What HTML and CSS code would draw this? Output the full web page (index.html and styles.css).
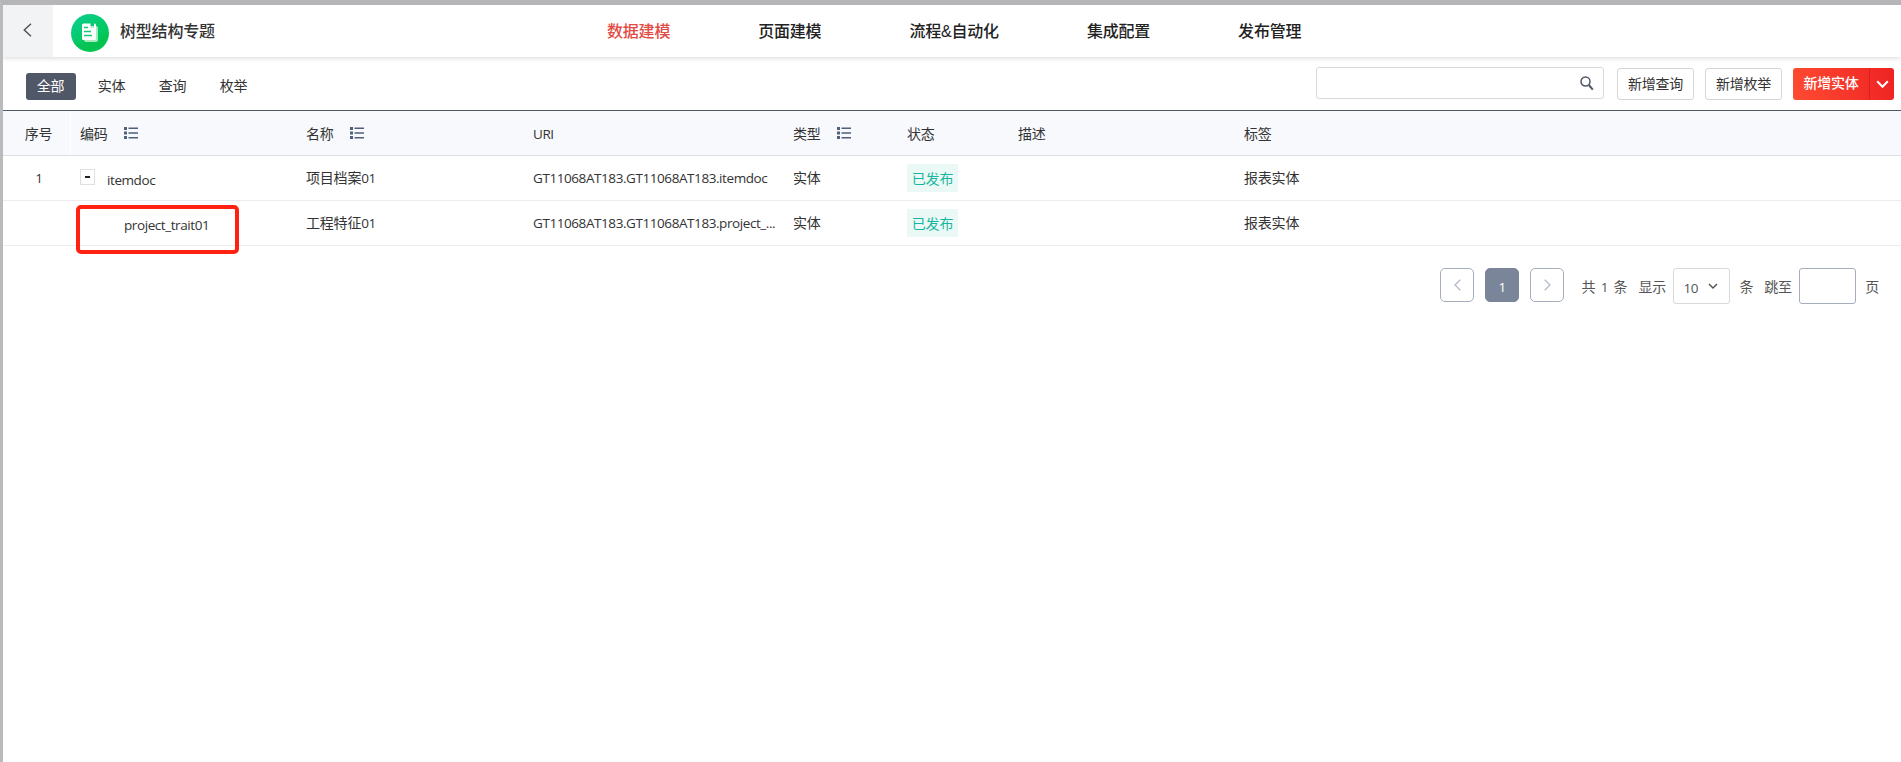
FILE: index.html
```html
<!DOCTYPE html>
<html lang="zh-CN">
<head>
<meta charset="utf-8">
<title>树型结构专题</title>
<link rel="stylesheet" href="styles.css">
</head>
<body>
<svg width="0" height="0" class="defs">
  <symbol id="list" viewBox="0 0 14 12"><path d="M0 0h3v3H0zM0 4.5h3v3H0zM0 9h3v3H0zM4.500 .5H14v1.600H4.500zM4.500 5.200H14v1.600H4.500zM4.500 9.900H14v1.600H4.500z"/></symbol>
</svg>
<header class="header">
  <button class="back"><svg width="9" height="14" viewBox="0 0 9 14"><path d="M8 .8 1.3 7 8 13.2"/></svg></button>
  <svg class="logo" width="38" height="38" viewBox="0 0 38 38">
    <defs><linearGradient id="g" x1="0" y1="0" x2=".7" y2="1"><stop offset="0" stop-color="#0bcf93"/><stop offset="1" stop-color="#00c64a"/></linearGradient></defs>
    <circle cx="19" cy="19" r="19" fill="url(#g)"/>
    <path d="M2 27 9 30 14 24 28 27 37 18A19 19 0 0 1 2 27z" fill="#08bd4c" opacity=".45"/>
    <path d="M14 12h11a2 2 0 0 1 2 2v12a2 2 0 0 1-2 2H15a2 2 0 0 1-2-2z" fill="#a4ebc0"/>
    <path d="M12.500 9.500h7v5l1.800-1.200 1.700 1.200v-5h.5a1.500 1.500 0 0 1 1.500 1.500v13.500a1.500 1.500 0 0 1-1.500 1.500h-11a1.500 1.500 0 0 1-1.500-1.500V11a1.500 1.500 0 0 1 1.500-1.500z" fill="#fff"/>
    <path d="M13 13.500h4M13 17.500h7M13 21.500h8" stroke="#12c978" stroke-width="1.300"/>
  </svg>
  <h1 class="title">树型结构专题</h1>
  <nav class="nav"><a class="active">数据建模</a><a>页面建模</a><a>流程&amp;自动化</a><a>集成配置</a><a>发布管理</a></nav>
</header>
<main class="main">
  <div class="toolbar">
    <div class="tabs"><span class="tab on">全部</span><span class="tab">实体</span><span class="tab">查询</span><span class="tab">枚举</span></div>
    <div class="search"><svg width="14" height="15" viewBox="0 0 14 15"><circle cx="5.500" cy="5.500" r="4.500"/><path d="m8.800 9 4 4.600" stroke-width="2"/></svg></div>
    <button class="btn">新增查询</button>
    <button class="btn">新增枚举</button>
    <div class="primary"><span class="primary-label">新增实体</span><span class="primary-more"><svg width="13" height="9" viewBox="0 0 13 9"><path d="m1.200 1.200 5.300 5.600 5.300-5.600"/></svg></span></div>
  </div>
  <div class="table">
    <div class="row head">
      <div class="cell index">序号</div>
      <div class="cell">编码<svg class="list"><use href="#list"/></svg></div>
      <div class="cell">名称<svg class="list"><use href="#list"/></svg></div>
      <div class="cell latin">URI</div>
      <div class="cell">类型<svg class="list"><use href="#list"/></svg></div>
      <div class="cell">状态</div>
      <div class="cell">描述</div>
      <div class="cell">标签</div>
    </div>
    <div class="row">
      <div class="cell index latin">1</div>
      <div class="cell"><span class="toggle"></span><span class="code latin">itemdoc</span></div>
      <div class="cell">项目档案<span class="latin">01</span></div>
      <div class="cell latin">GT11068AT183.GT11068AT183.itemdoc</div>
      <div class="cell">实体</div>
      <div class="cell"><span class="badge">已发布</span></div>
      <div class="cell"></div>
      <div class="cell">报表实体</div>
    </div>
    <div class="row">
      <div class="cell index"></div>
      <div class="cell marked"><span class="code child latin">project_trait01</span></div>
      <div class="cell">工程特征<span class="latin">01</span></div>
      <div class="cell latin">GT11068AT183.GT11068AT183.project_...</div>
      <div class="cell">实体</div>
      <div class="cell"><span class="badge">已发布</span></div>
      <div class="cell"></div>
      <div class="cell">报表实体</div>
    </div>
  </div>
  <div class="pager">
    <button class="page"><svg width="7" height="12" viewBox="0 0 7 12"><path d="M6.300 .7 1 6l5.300 5.300"/></svg></button>
    <button class="page current">1</button>
    <button class="page"><svg width="7" height="12" viewBox="0 0 7 12"><path d="M.7 .7 6 6 .7 11.300"/></svg></button>
    <span class="total">共 <span class="latin">1</span> 条</span>
    <span class="show">显示</span>
    <div class="select"><span class="latin">10</span><svg width="10" height="7" viewBox="0 0 10 7"><path d="m1 1 4 4 4-4"/></svg></div>
    <span class="unit">条</span>
    <span class="jump">跳至</span>
    <input class="goto">
    <span class="suffix">页</span>
  </div>
</main>
</body>
</html>
```

FILE: styles.css
```css
*, *::before, *::after { box-sizing: border-box; }
body {
  margin: 0;
  height: 762px;
  overflow: hidden;
  border-top: 5px solid #b6b6b8;
  border-left: 3px solid #b8bbbe;
  background: #fff;
  color: #333;
  font: 14px/20px "Liberation Sans", "Noto Sans CJK SC", sans-serif;
  letter-spacing: -0.2px;
}
.defs { position: absolute; }
svg { display: block; flex: none; }
button { margin: 0; padding: 0; font: inherit; letter-spacing: inherit; color: inherit; background: #fff; }
.latin { font-family: "Open Sans", "Noto Sans CJK SC", sans-serif; font-size: 13.5px; letter-spacing: -0.42px; }

.header {
  position: relative;
  display: flex;
  align-items: center;
  height: 52px;
  box-shadow: 0 1px 5px rgba(0, 0, 0, .16);
}
.back {
  display: flex;
  align-items: center;
  width: 50px;
  height: 52px;
  padding: 0 0 2px 20px;
  border: 0;
  background: #f2f3f5;
}
.back path { fill: none; stroke: #555; stroke-width: 1.5; }
.logo { margin: 4px 11px 0 18px; }
.title { margin: 2px 0 0; width: 96px; font-size: 16px; font-weight: 500; white-space: nowrap; }
.nav { display: flex; gap: 88px; margin: 2px 0 0 391px; font-size: 16px; font-weight: 500; white-space: nowrap; }
.nav a { color: #222; }
.nav .active { color: #e14c46; }

.toolbar { display: flex; align-items: flex-start; height: 53px; padding: 10px 7px 0 23px; }
.tabs { display: flex; gap: 11px; flex: 1; margin-top: 6px; }
.tab { width: 50px; height: 27px; line-height: 27px; padding-right: 1px; text-align: center; border-radius: 3px; }
.tab.on { background: #505766; color: #fff; }
.search {
  display: flex;
  align-items: center;
  justify-content: flex-end;
  width: 288px;
  height: 32px;
  padding-right: 9px;
  border: 1px solid #d9d9d9;
  border-radius: 3px;
  margin-right: 13px;
}
.search svg { fill: none; stroke: #505766; stroke-width: 1.5; }
.btn { width: 77px; height: 32px; margin: 1px 11px 0 0; border: 1px solid #d5d6d8; border-radius: 3px; white-space: nowrap; }
.primary {
  display: flex;
  width: 101px;
  height: 32px;
  margin-top: 1px;
  border-radius: 3px;
  color: #fff;
  font-weight: 500;
  background: linear-gradient(75deg, #ff4c32, #ee2223);
}
.primary-label { width: 77px; line-height: 31px; text-align: center; border-right: 1px solid #dd1f21; }
.primary-more { display: flex; flex: 1; align-items: center; justify-content: center; }
.primary-more path { fill: none; stroke: #fff; stroke-width: 2; }

.row {
  display: grid;
  grid-template-columns: 67px 1px 226px 227px 260px 114px 111px 226px 1fr;
  height: 45px;
  border-bottom: 1px solid #ececec;
}
.row > :first-child { grid-column: 1; }
.row > :nth-child(2) { grid-column: 3; }
.head { height: 46px; border-top: 1px solid #505766; border-bottom-color: #dcdfe4; background: #f7f9fd; }
.cell { display: flex; align-items: center; padding: 0 0 0 9px; white-space: nowrap; }
.head .cell { padding-top: 2px; }
.row .index { justify-content: center; padding-left: 4px; margin-right: -1px; }
.head .index { border-right: 1px solid #fff; }
.list { width: 14px; height: 12px; margin: 0 0 3px 16px; fill: #505f7a; }
.toggle {
  display: flex;
  align-items: center;
  justify-content: center;
  width: 15px;
  height: 16px;
  margin: 0 12px 2px 0;
  border: 1px solid #e0e0e0;
}
.toggle::before { content: ""; width: 5px; height: 2px; background: #222; }
.code { padding-top: 4px; }
.child { margin-left: 44px; }
.marked { position: relative; }
.marked::after {
  content: "";
  position: absolute;
  left: 5px;
  top: 4px;
  width: 163px;
  height: 49px;
  border: 4px solid #ff2112;
  border-radius: 5px;
}
.badge { width: 51px; height: 28px; line-height: 30px; text-align: center; color: #18b6a0; background: #ebf9f6; }

.pager { display: flex; align-items: flex-start; justify-content: flex-end; padding: 22px 22px 0 0; color: #555; line-height: 39px; white-space: nowrap; }
.page {
  display: flex;
  align-items: center;
  justify-content: center;
  width: 34px;
  height: 34px;
  margin-right: 11px;
  border: 1px solid #a5adbd;
  border-radius: 5px;
}
.page path { fill: none; stroke: #b8bfcb; stroke-width: 1.5; }
.page.current { background: #7a8599; border-color: #7a8599; color: #fff; font: 13.5px "Open Sans", sans-serif; padding-top: 3px; }
.total { width: 46px; margin: 0 11px 0 6px; display: flex; justify-content: space-between; }
.show { width: 28px; margin-right: 7px; }
.select { display: flex; align-items: center; width: 57px; height: 36px; padding: 0 11px 0 9px; justify-content: space-between; border: 1px solid #d9d9d9; border-radius: 3px; }
.select .latin { padding-top: 5px; }
.select path { fill: none; stroke: #555; stroke-width: 1.5; }
.unit { margin: 0 11px 0 9px; }
.jump { width: 28px; margin-right: 7px; }
.goto { width: 57px; height: 36px; margin: 0 9px 0 0; border: 1px solid #a5adbd; border-radius: 3px; background: #fff; }
```
